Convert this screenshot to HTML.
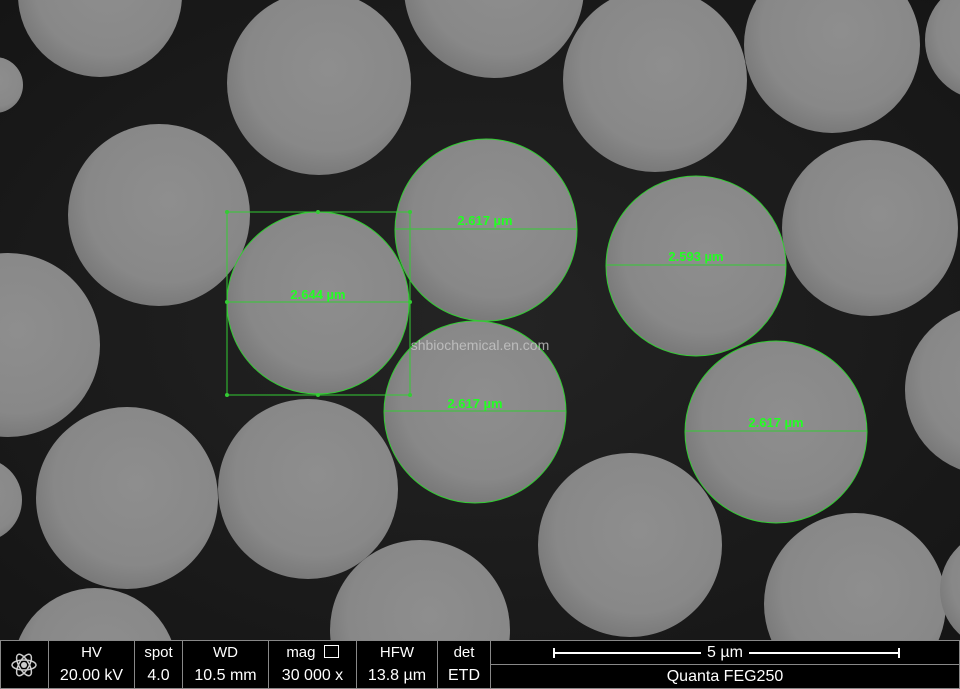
<!DOCTYPE html>
<html style="overflow:hidden;height:689px"><head><meta charset="utf-8"><style>
body{margin:0;width:960px;height:689px;overflow:hidden;background:#000;font-family:"Liberation Sans",sans-serif;position:relative}
svg{position:absolute;left:0;top:0}
.bar{position:absolute;left:0;top:640px;width:960px;height:49px;overflow:hidden;background:#000;color:#fff;font-family:"Liberation Sans",sans-serif}
.c{position:absolute;top:0;height:47px;border:1px solid #888;border-right:none;text-align:center;font-size:15px;line-height:23px;box-sizing:content-box}
.c .b{font-size:16px}
</style></head><body>
<svg width="960" height="640" viewBox="0 0 960 640">
<defs>
<radialGradient id="bg" cx="50%" cy="50%" r="70%"><stop offset="0" stop-color="#242424"/><stop offset="1" stop-color="#151515"/></radialGradient>
<radialGradient id="s" cx="55%" cy="42%" r="60%"><stop offset="0" stop-color="#8e8e8e"/><stop offset="0.75" stop-color="#888888"/><stop offset="1" stop-color="#787878"/></radialGradient>
</defs>
<rect width="960" height="640" fill="url(#bg)"/>
<g fill="url(#s)">
<circle cx="100" cy="-5" r="82"/>
<circle cx="319" cy="83" r="92"/>
<circle cx="494" cy="-12" r="90"/>
<circle cx="655" cy="80" r="92"/>
<circle cx="832" cy="45" r="88"/>
<circle cx="985" cy="40" r="60"/>
<circle cx="-5" cy="85" r="28"/>
<circle cx="159" cy="215" r="91"/>
<circle cx="486" cy="230" r="91"/>
<circle cx="696" cy="266" r="90"/>
<circle cx="870" cy="228" r="88"/>
<circle cx="8" cy="345" r="92"/>
<circle cx="318" cy="303" r="91"/>
<circle cx="475" cy="412" r="91"/>
<circle cx="776" cy="432" r="91"/>
<circle cx="990" cy="390" r="85"/>
<circle cx="-20" cy="500" r="42"/>
<circle cx="127" cy="498" r="91"/>
<circle cx="308" cy="489" r="90"/>
<circle cx="630" cy="545" r="92"/>
<circle cx="855" cy="604" r="91"/>
<circle cx="420" cy="630" r="90"/>
<circle cx="95" cy="670" r="82"/>
<circle cx="1000" cy="590" r="60"/>
</g>
<g stroke="#3c3" stroke-width="1" fill="none">
<circle cx="486" cy="230" r="91"/>
<circle cx="696" cy="266" r="90"/>
<circle cx="318" cy="303" r="91"/>
<circle cx="475" cy="412" r="91"/>
<circle cx="776" cy="432" r="91"/>
<rect x="227" y="212" width="183" height="183"/>
<line x1="395" y1="229" x2="577" y2="229"/>
<line x1="227" y1="302" x2="410" y2="302"/>
<line x1="606" y1="265" x2="786" y2="265"/>
<line x1="384" y1="411" x2="566" y2="411"/>
<line x1="685" y1="431" x2="867" y2="431"/>
</g>
<g fill="#3c3"><circle cx="227" cy="212" r="2"/><circle cx="318" cy="212" r="2"/><circle cx="410" cy="212" r="2"/><circle cx="227" cy="302" r="2"/><circle cx="410" cy="302" r="2"/><circle cx="227" cy="395" r="2"/><circle cx="318" cy="395" r="2"/><circle cx="410" cy="395" r="2"/></g>
<g fill="#2f2" font-size="13" font-weight="bold" text-anchor="middle" font-family="Liberation Sans, sans-serif">
<text x="485" y="225">2.617 µm</text>
<text x="318" y="299">2.644 µm</text>
<text x="696" y="261">2.593 µm</text>
<text x="475" y="408">2.617 µm</text>
<text x="776" y="427">2.617 µm</text>
</g>
<text x="480" y="350" fill="#c8c8c8" fill-opacity="0.8" font-size="14" text-anchor="middle" font-family="Liberation Sans, sans-serif">shbiochemical.en.com</text>
</svg>
<div class="bar">
<div class="c" style="left:0;width:47px"><svg width="47" height="47" viewBox="0 0 47 47" style="position:absolute;left:0;top:0"><g fill="none" stroke="#ccc" stroke-width="1.5"><ellipse cx="23" cy="24" rx="12" ry="5"/><ellipse cx="23" cy="24" rx="12" ry="5" transform="rotate(60 23 24)"/><ellipse cx="23" cy="24" rx="12" ry="5" transform="rotate(-60 23 24)"/></g><circle cx="23" cy="24" r="3" fill="#ccc"/></svg></div>
<div class="c" style="left:48px;width:85px">HV<br><span class="b">20.00 kV</span></div>
<div class="c" style="left:134px;width:47px">spot<br><span class="b">4.0</span></div>
<div class="c" style="left:182px;width:85px">WD<br><span class="b">10.5 mm</span></div>
<div class="c" style="left:268px;width:87px">mag <span style="display:inline-block;width:13px;height:11px;border:1px solid #fff;vertical-align:-1px;margin-left:4px"></span><br><span class="b">30 000 x</span></div>
<div class="c" style="left:356px;width:80px">HFW<br><span class="b">13.8 µm</span></div>
<div class="c" style="left:437px;width:52px">det<br><span class="b">ETD</span></div>
<div class="c" style="left:490px;width:468px;border-right:1px solid #888">
<div style="position:absolute;left:0;top:23px;width:468px;border-top:1px solid #888"></div>
<div style="position:absolute;left:62px;top:11px;width:148px;height:2px;background:#fff"></div>
<div style="position:absolute;left:62px;top:7px;width:2px;height:10px;background:#fff"></div>
<div style="position:absolute;left:258px;top:11px;width:151px;height:2px;background:#fff"></div>
<div style="position:absolute;left:407px;top:7px;width:2px;height:10px;background:#fff"></div>
<div style="position:absolute;left:210px;top:0;width:48px;font-size:16px">5 µm</div>
<div style="position:absolute;left:0;top:24px;width:468px;font-size:16px">Quanta FEG250</div>
</div>
</div>
</body></html>
